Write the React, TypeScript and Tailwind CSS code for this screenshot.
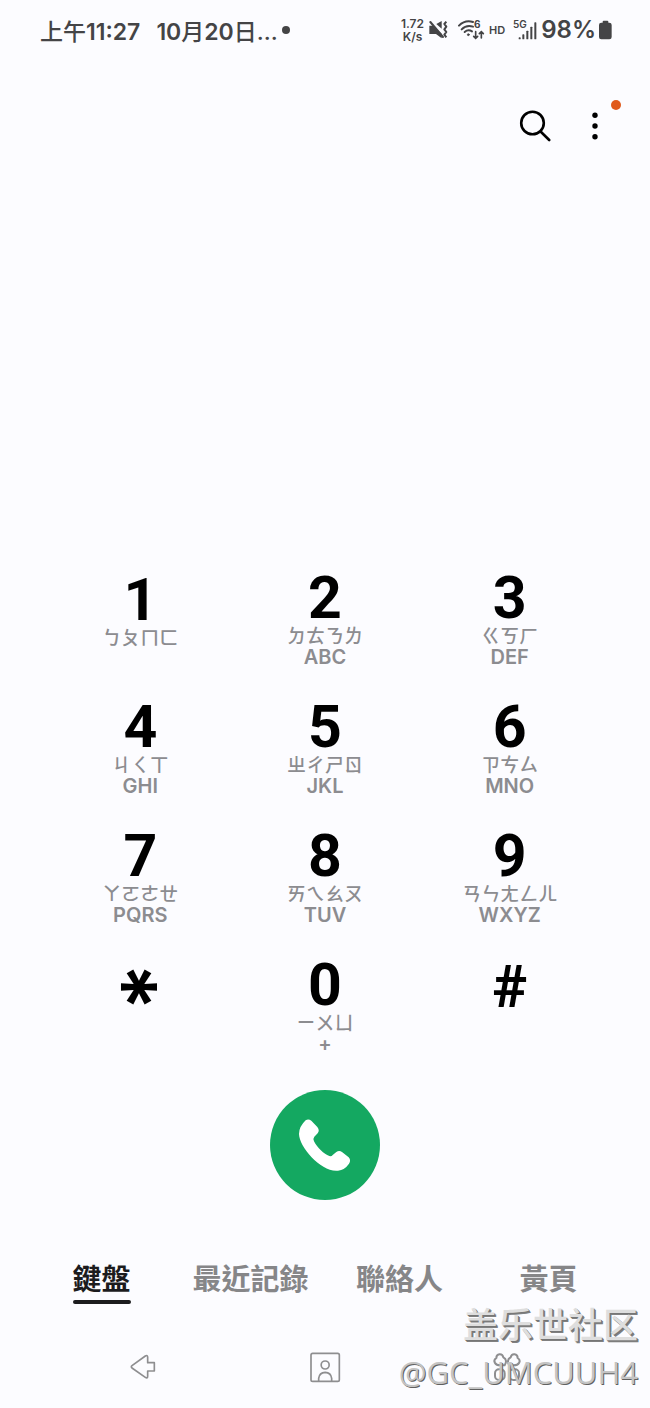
import React, { useState } from 'react';

interface Key {
  main: string;
  zhuyin?: string;
  latin?: string;
}

const KEYS: Key[] = [
  { main: '1', zhuyin: 'ㄅㄆㄇㄈ' },
  { main: '2', zhuyin: 'ㄉㄊㄋㄌ', latin: 'ABC' },
  { main: '3', zhuyin: 'ㄍㄎㄏ', latin: 'DEF' },
  { main: '4', zhuyin: 'ㄐㄑㄒ', latin: 'GHI' },
  { main: '5', zhuyin: 'ㄓㄔㄕㄖ', latin: 'JKL' },
  { main: '6', zhuyin: 'ㄗㄘㄙ', latin: 'MNO' },
  { main: '7', zhuyin: 'ㄚㄛㄜㄝ', latin: 'PQRS' },
  { main: '8', zhuyin: 'ㄞㄟㄠㄡ', latin: 'TUV' },
  { main: '9', zhuyin: 'ㄢㄣㄤㄥㄦ', latin: 'WXYZ' },
  { main: '*' },
  { main: '0', zhuyin: 'ㄧㄨㄩ', latin: '+' },
  { main: '#' },
];

const TABS = ['鍵盤', '最近記錄', '聯絡人', '黃頁'];

const StatusBar: React.FC = () => (
  <header className="flex h-16 items-center justify-between pl-10 pr-[37px] text-[#444446]">
    <div className="flex items-center text-[23px] font-medium leading-8">
      <span>上午<span className="font-semibold">11:27</span></span>
      <span className="ml-4">
        <span className="font-semibold">10</span>月<span className="font-semibold">20</span>日...
      </span>
      <span className="mb-1 ml-1 h-2 w-2 rounded-full bg-[#444446]" />
    </div>
    <div className="flex items-center pb-1">
      <div className="text-center text-xs font-semibold leading-[13px]">
        <div>1.72</div>
        <div>K/s</div>
      </div>
      {/* muted, vibrate */}
      <svg viewBox="117 54 63 66" className="ml-1 h-[22px] w-[21px]" fill="currentColor">
        <path d="M121 74 L133 74 L158 98 L158 112 L141 99 L121 99 Z" />
        <path d="M142 69 L158 60 L158 83 Z" />
        <path d="M124 63 L162 108" stroke="currentColor" strokeWidth="6" strokeLinecap="round" />
        <path d="M172 62 L166 69 L172 77 L166 85 L172 93 L166 101 L172 109" fill="none" stroke="currentColor" strokeWidth="6" strokeLinejoin="round" />
      </svg>
      {/* wifi 6 */}
      <svg viewBox="198 54 84 66" className="ml-2 h-[22px] w-7" fill="none" stroke="currentColor" strokeWidth="6" strokeLinecap="round">
        <path d="M204 74 Q222 56 246 63" />
        <path d="M212 85 Q226 71 246 77" />
        <path d="M221 93 Q231 84 243 91" />
        <circle cx="232" cy="101" r="3" fill="currentColor" strokeWidth="2" />
        <path d="M254 92 V111 M248 106 L254 112 L260 106" strokeWidth="5" />
        <path d="M271 111 V92 M265 98 L271 92 L277 98" strokeWidth="5" />
        <text x="249" y="82" fontSize="30" fontWeight="700" fill="currentColor" stroke="none">6</text>
      </svg>
      <span className="ml-1 text-[11px] font-semibold">HD</span>
      {/* signal */}
      <svg viewBox="369 54 72 66" className="ml-2 h-[22px] w-6" fill="currentColor">
        <text x="369" y="80" fontSize="30" fontWeight="600">5G</text>
        <rect x="386" y="109" width="6" height="6" rx="2" />
        <rect x="397" y="100" width="6" height="15" rx="2" />
        <rect x="409" y="89" width="6" height="26" rx="2" />
        <rect x="421" y="77" width="6" height="38" rx="2" />
        <rect x="433" y="64" width="6" height="51" rx="2" />
      </svg>
      <span className="ml-1 text-2xl font-semibold leading-8">98%</span>
      <svg viewBox="624 54 45 66" className="ml-0.5 h-[22px] w-[15px]" fill="currentColor">
        <rect x="638" y="59" width="17" height="12" rx="3" />
        <rect x="627" y="65" width="38" height="50" rx="7" />
      </svg>
    </div>
  </header>
);

const KeyButton: React.FC<{ item: Key }> = ({ item }) => (
  <button
    type="button"
    className={`flex flex-col items-center text-[#8c8c90] ${item.latin ? '' : 'pt-0.5'}`}
  >
    {item.main === '*' ? (
      <span className="flex h-14 rotate-90 items-center text-[88px] font-semibold leading-none text-black">
        <span className="h-14 leading-[88px]">*</span>
      </span>
    ) : (
      <span className="font-['Roboto',sans-serif] text-[59px] font-bold leading-14 text-black">
        {item.main}
      </span>
    )}
    {item.zhuyin && <span className="text-[19px] font-medium leading-[21px]">{item.zhuyin}</span>}
    {item.latin && <span className="text-xl font-semibold leading-[21px]">{item.latin}</span>}
  </button>
);

const NavBar: React.FC = () => (
  <nav className="mt-5 grid h-[82px] grid-cols-3 px-13 text-[#8e8e90]">
    <button type="button" aria-label="返回" className="flex items-center justify-center">
      <svg viewBox="237 339 84 84" className="h-7 w-7" fill="none" stroke="currentColor" strokeWidth="5" strokeLinejoin="round">
        <path d="M246 377 L286 348 Q293 344 293 352 L293 368 L313 368 L313 393 L293 393 L293 408 Q293 417 286 412 L246 384 Q242 380 246 377 Z" />
      </svg>
    </button>
    <button type="button" aria-label="首頁" className="flex items-center justify-center">
      <svg viewBox="776 333 96 96" className="h-8 w-8" fill="none" stroke="currentColor" strokeWidth="5">
        <rect x="782" y="340" width="85" height="84" rx="5" />
        <circle cx="824.5" cy="375" r="12" />
        <path d="M805 423 V415 Q807 398 824.5 397 Q842 398 844 415 V423" />
      </svg>
    </button>
    <button type="button" aria-label="最近使用" className="flex items-center justify-center">
      <svg viewBox="424 333 96 96" className="h-8 w-8" fill="none" stroke="currentColor" strokeWidth="6">
        <path d="M465 376 H452 C436 376 428 362 440 354 C440 340 458 338 461 352 C472 357 470 368 465 376 Z" />
        <path d="M479 376 H492 C508 376 516 362 504 354 C504 340 486 338 483 352 C472 357 474 368 479 376 Z" />
        <rect x="436" y="388" width="29" height="32" rx="12" />
        <rect x="479" y="388" width="29" height="32" rx="12" />
      </svg>
    </button>
  </nav>
);

export default function App() {
  const [tab, setTab] = useState(TABS[0]);

  return (
    <div
      lang="zh-Hant"
      className="relative flex min-h-screen flex-col bg-[#fcfcff] font-['Inter','Noto_Sans_CJK_TC',sans-serif]"
    >
      <StatusBar />

      <div className="mt-8 flex items-center justify-end pr-[25px]">
        <button type="button" aria-label="搜尋" className="flex h-15 w-15 items-center justify-center">
          <svg viewBox="0 0 32 32" className="h-8 w-8" fill="none" stroke="#000" strokeWidth="2.6" strokeLinecap="round">
            <circle cx="13.5" cy="13" r="11.3" />
            <path d="M21.8 21.8 L30.2 30" />
          </svg>
        </button>
        <button type="button" aria-label="更多選項" className="relative flex h-15 w-15 items-center justify-center">
          <svg viewBox="0 0 8 32" className="h-8 w-2">
            <circle cx="4" cy="5.2" r="2.7" />
            <circle cx="4" cy="16" r="2.7" />
            <circle cx="4" cy="26.8" r="2.7" />
          </svg>
          <span className="absolute right-1 top-1 h-2.5 w-2.5 rounded-full bg-[#e0591b]" />
        </button>
      </div>

      <main className="mt-auto">
        <div className="grid auto-rows-[129px] grid-cols-3 px-12">
          {KEYS.map((k) => (
            <KeyButton key={k.main} item={k} />
          ))}
        </div>

        <button type="button" aria-label="撥號" className="mx-auto mt-1 block h-[110px] w-[110px] rounded-full bg-[#14a861]">
          <svg viewBox="60 28 330 330" className="h-full w-full" fill="#fff">
            <path d="M167 119 Q175 114 184 120 L202 139 Q210 149 203 158 L193 168 Q188 174 192 182 C202 202 222 220 238 226 Q244 228 249 222 L259 214 Q268 208 277 215 L296 230 Q304 239 297 249 Q284 268 264 270 C215 276 148 200 147 160 Q147 138 167 119 Z" />
          </svg>
        </button>
      </main>

      <div role="tablist" className="mt-15 grid grid-cols-4 px-[27px]">
        {TABS.map((t) => (
          <button
            key={t}
            type="button"
            role="tab"
            aria-selected={t === tab}
            onClick={() => setTab(t)}
            className={`flex flex-col items-center pb-0.5 text-[29px] font-bold leading-10 ${
              t === tab ? 'text-[#1c1c1e]' : 'text-[#868688]'
            }`}
          >
            <span>{t}</span>
            {t === tab && <span className="h-1 w-[58px] rounded-full bg-[#1c1c1e]" />}
          </button>
        ))}
      </div>

      <NavBar />

      <div className="pointer-events-none absolute bottom-2.5 right-3 text-right">
        <div
          lang="zh-Hans"
          className="font-['Noto_Sans_CJK_SC',sans-serif] text-[35px] font-medium leading-[46px] text-[#dedede] [text-shadow:1px_1px_0_#767676,2px_2px_0_#808080]"
        >
          盖乐世社区
        </div>
        <div className="font-['Open_Sans',sans-serif] text-[31px] leading-[52px] text-[#c4c4c4] [text-shadow:1px_1px_0_#606060]">
          @GC_UMCUUH4
        </div>
      </div>
    </div>
  );
}
